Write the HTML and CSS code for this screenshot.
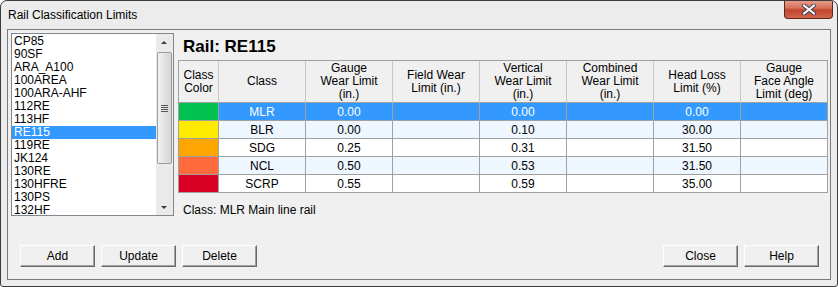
FILE: index.html
```html
<!DOCTYPE html>
<html lang="en">
<head>
	<meta charset="UTF-8">
	<title>Rail Classification Limits</title>
	<link rel="stylesheet" href="styles.css">
</head>
<body>
	<div class="window">
		<div class="titlebar">
			<span class="title">Rail Classification Limits</span>
			<div class="closebtn">
				<svg width="16" height="11" viewBox="0 0 16 11"><path d="M3 1.5 L13 9.5 M13 1.5 L3 9.5" stroke="#3a3f5a" stroke-width="4" stroke-linecap="round"/><path d="M3 1.5 L13 9.5 M13 1.5 L3 9.5" stroke="#fff" stroke-width="2.2" stroke-linecap="round"/></svg>
			</div>
		</div>
		<div class="client">
			<div class="main">
				<div class="listbox">
					<ul class="items">
						<li>CP85</li>
						<li>90SF</li>
						<li>ARA_A100</li>
						<li>100AREA</li>
						<li>100ARA-AHF</li>
						<li>112RE</li>
						<li>113HF</li>
						<li class="sel">RE115</li>
						<li>119RE</li>
						<li>JK124</li>
						<li>130RE</li>
						<li>130HFRE</li>
						<li>130PS</li>
						<li>132HF</li>
					</ul>
					<div class="scroll">
						<div class="arrow up"></div>
						<div class="track">
							<div class="thumb"><span class="grip"></span></div>
						</div>
						<div class="arrow down"></div>
					</div>
				</div>
				<div class="panel">
					<h1 class="railname">Rail: RE115</h1>
					<table class="grid">
						<tr class="head">
							<th class="c0">Class<br>Color</th>
							<th>Class</th>
							<th>Gauge<br>Wear Limit<br>(in.)</th>
							<th>Field Wear<br>Limit (in.)</th>
							<th>Vertical<br>Wear Limit<br>(in.)</th>
							<th>Combined<br>Wear Limit<br>(in.)</th>
							<th>Head Loss<br>Limit (%)</th>
							<th>Gauge<br>Face Angle<br>Limit (deg)</th>
						</tr>
						<tr class="selrow">
							<td class="sw green"></td><td>MLR</td><td>0.00</td><td></td><td>0.00</td><td></td><td>0.00</td><td></td>
						</tr>
						<tr class="alt">
							<td class="sw yellow"></td><td>BLR</td><td>0.00</td><td></td><td>0.10</td><td></td><td>30.00</td><td></td>
						</tr>
						<tr>
							<td class="sw orange"></td><td>SDG</td><td>0.25</td><td></td><td>0.31</td><td></td><td>31.50</td><td></td>
						</tr>
						<tr class="alt">
							<td class="sw coral"></td><td>NCL</td><td>0.50</td><td></td><td>0.53</td><td></td><td>31.50</td><td></td>
						</tr>
						<tr>
							<td class="sw red"></td><td>SCRP</td><td>0.55</td><td></td><td>0.59</td><td></td><td>35.00</td><td></td>
						</tr>
					</table>
					<p class="classinfo">Class: MLR Main line rail</p>
				</div>
			</div>
			<div class="buttons">
				<div class="group">
					<button class="btn">Add</button>
					<button class="btn">Update</button>
					<button class="btn">Delete</button>
				</div>
				<div class="group">
					<button class="btn">Close</button>
					<button class="btn">Help</button>
				</div>
			</div>
		</div>
	</div>
</body>
</html>
```

FILE: styles.css
```css
*{
	margin: 0;
	padding: 0;
	box-sizing: border-box;
}
body{
	background: #ffffff;
	font-family: "Liberation Sans", Arial, sans-serif;
	font-size: 11px;
	color: #000;
}
.window{
	width: 838px;
	height: 287px;
	border: 1px solid #3c3c3c;
	border-radius: 7px 7px 3px 3px;
	background: #ececec;
	display: flex;
	flex-direction: column;
	overflow: hidden;
}
.titlebar{
	height: 28px;
	display: flex;
	justify-content: space-between;
	align-items: flex-start;
}
.title{
	font-family: "Liberation Sans", Arial, sans-serif;
	font-size: 12px;
	line-height: 16px;
	padding: 6px 0 0 7px;
}
.closebtn{
	width: 49px;
	height: 19px;
	margin-top: -1px;
	margin-right: 4px;
	border: 1px solid #5a2a22;
	border-top: 0;
	border-radius: 0 0 4px 4px;
	background: linear-gradient(#e8a08f 0%, #d6705a 45%, #c0442c 55%, #d2644a 100%);
	display: flex;
	align-items: center;
	justify-content: center;
}
.client{
	flex: 1;
	margin: 0 6px 6px 6px;
	border: 1px solid #7a7a7a;
	background: #f0f0f0;
	display: flex;
	flex-direction: column;
}
.main{
	display: flex;
	padding: 3px 0 0 3px;
	gap: 4px;
}
.listbox{
	width: 163px;
	height: 183px;
	border: 1px solid #828790;
	background: #fff;
	display: flex;
}
.items{
	list-style: none;
	flex: 1;
	padding-top: 1px;
}
.items li{
	height: 13px;
	line-height: 13px;
	padding-left: 2px;
	font-size: 12px;
}
.items li.sel{
	background: #3399ff;
	color: #fff;
}
.scroll{
	width: 17px;
	display: flex;
	flex-direction: column;
	background: #eaeaea;
}
.arrow{
	height: 17px;
	position: relative;
}
.arrow.up::after,
.arrow.down::after{
	content: "";
	position: absolute;
	left: 5px;
	border-left: 3px solid transparent;
	border-right: 3px solid transparent;
}
.arrow.up::after{
	top: 7px;
	border-bottom: 3px solid #3c3c3c;
}
.arrow.down::after{
	top: 8px;
	border-top: 3px solid #3c3c3c;
}
.track{
	flex: 1;
	padding: 1px 0;
}
.thumb{
	margin: 0 0 0 1px;
	width: 15px;
	height: 112px;
	border: 1px solid #9b9b9b;
	border-radius: 2px;
	background: linear-gradient(90deg, #f2f2f2, #e2e2e2 50%, #d6d6d6);
	display: flex;
	align-items: center;
	justify-content: center;
}
.grip{
	width: 7px;
	height: 7px;
	background: repeating-linear-gradient(#555 0 1px, transparent 1px 2px);
}
.panel{
	flex: 1;
	padding-right: 2px;
}
.railname{
	font-size: 17px;
	font-weight: bold;
	line-height: 20px;
	height: 27px;
	padding: 4px 0 0 5px;
}
.grid{
	border-collapse: collapse;
	border: 1px solid #a0a0a0;
	table-layout: fixed;
	width: 650px;
	font-family: "Liberation Sans", Arial, sans-serif;
	font-size: 12px;
}
.grid th,
.grid td{
	width: 87px;
	text-align: center;
	font-weight: normal;
	border-left: 1px solid #a0a0a0;
	border-top: 1px solid #a0a0a0;
	padding: 0;
}
.grid th.c0, .grid td.sw{
	width: 40px;
}
.grid th{
	height: 42px;
	line-height: 13px;
	background: #f0f0f0;
	border-left: 1px solid #c8c8c8;
	vertical-align: middle;
}
.grid th.c0{
	border-left: 0;
}
.grid td{
	height: 18px;
	line-height: 16px;
	padding-top: 1px;
	background: #fff;
}
.grid tr.alt td{
	background: #eef6ff;
}
.grid tr.selrow td{
	background: #3399ff;
	color: #fff;
}
.grid td.green{ background: #00c050 !important; }
.grid td.yellow{ background: #ffeb00 !important; }
.grid td.orange{ background: #ffa500 !important; }
.grid td.coral{ background: #ff6b3c !important; }
.grid td.red{ background: #d80024 !important; }
.classinfo{
	padding: 10px 0 0 5px;
	font-size: 12px;
}
.buttons{
	margin-top: auto;
	display: flex;
	justify-content: space-between;
	padding: 0 11px 12px 12px;
}
.group{
	display: flex;
	gap: 6px;
}
.btn{
	width: 75px;
	height: 22px;
	font-family: "Liberation Sans", Arial, sans-serif;
	font-size: 12px;
	color: #000;
	background: #f0f0f0;
	border: 1px solid;
	border-color: #ffffff #696969 #696969 #ffffff;
	box-shadow: inset -1px -1px 0 #a0a0a0;
}
```
